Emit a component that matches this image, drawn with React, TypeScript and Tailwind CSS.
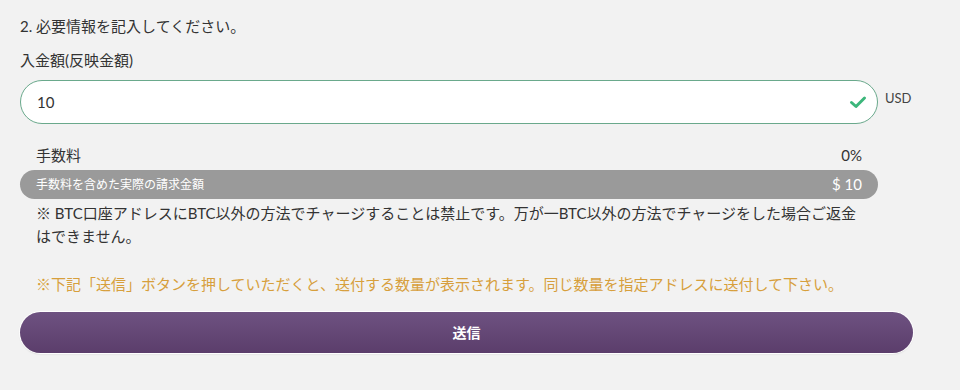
import React from "react";

export default function App() {
  return (
    <div
      className="w-[960px] h-[390px] bg-[#f2f2f2] pl-5 pt-[15px] text-[#333]"
      style={{ fontFamily: '"Lato", "Noto Sans CJK JP", sans-serif' }}
    >
      <p className="text-[15px] leading-[22px]">2. 必要情報を記入してください。</p>
      <p className="mt-[12px] text-[15px] leading-[22px]">入金額(反映金額)</p>
      <div className="mt-[9px] flex items-start gap-[7px]">
        <div className="w-[858px] h-[44px] rounded-full border border-[#6aa98c] bg-white flex items-center pl-4 pr-[10px]">
          <span className="text-[15px]">10</span>
          <svg className="ml-auto" width="18" height="14" viewBox="0 0 18 14" fill="none">
            <path d="M2.5 7.5 L7 11.5 L15.5 3" stroke="#3cb67b" strokeWidth="3" strokeLinecap="round" strokeLinejoin="round" />
          </svg>
        </div>
        <span className="text-[13px] mt-[9px] text-[#444]">USD</span>
      </div>
      <div className="w-[858px] flex justify-between px-4 mt-[20px] mb-[4px] text-[15px] leading-[22px]">
        <span>手数料</span>
        <span>0%</span>
      </div>
      <div className="w-[858px] h-[29px] rounded-full bg-[#9a9a9a] flex items-center justify-between px-4 text-white">
        <span className="text-[12px]">手数料を含めた実際の請求金額</span>
        <span className="text-[15px]">$ 10</span>
      </div>
      <p className="w-[858px] px-4 mt-[3px] text-[15px] leading-[23px]">
        ※ BTC口座アドレスにBTC以外の方法でチャージすることは禁止です。万が一BTC以外の方法でチャージをした場合ご返金
        <br />
        はできません。
      </p>
      <p className="px-4 mt-[25px] text-[15px] leading-[22px] text-[#d79f3c]">
        ※下記「送信」ボタンを押していただくと、送付する数量が表示されます。同じ数量を指定アドレスに送付して下さい。
      </p>
      <button className="mt-[17px] w-[893px] h-[41px] rounded-full bg-gradient-to-b from-[#6e5281] to-[#5b3d6b] text-white text-[14px] font-bold shadow-[0_0_0_1px_#ffffff,0_1px_2px_rgba(0,0,0,0.15)]">
        送信
      </button>
    </div>
  );
}
